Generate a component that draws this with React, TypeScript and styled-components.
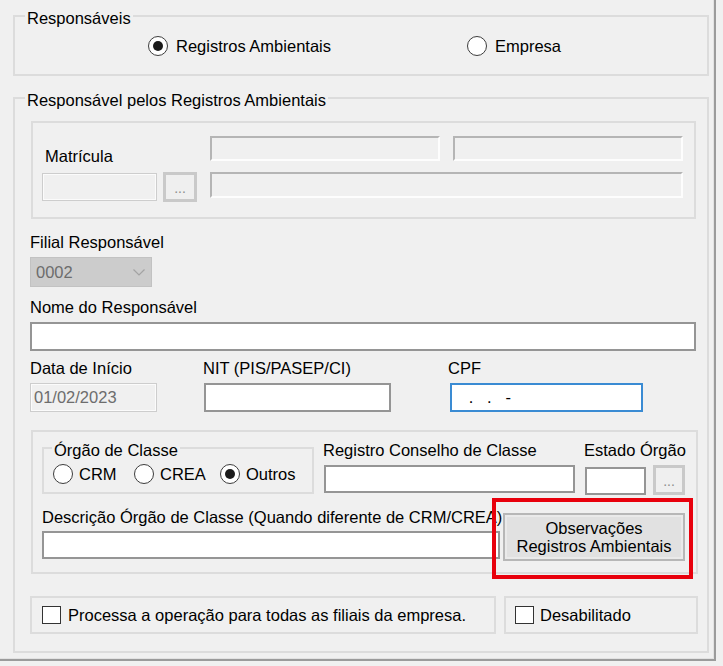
import styled, { createGlobalStyle } from 'styled-components';

const GlobalStyle = createGlobalStyle`
  html, body {
    margin: 0;
    background: #f0f0f0;
  }
  body {
    font-family: "Liberation Sans", Arial, sans-serif;
    font-size: 16.5px;
    color: #000;
  }
  * {
    box-sizing: border-box;
  }
`;

const Frame = styled.div`
  width: 716px;
  height: 661px;
  padding-top: 5px;
  border-right: 2px solid #9b9b9b;
  border-bottom: 2px solid #9b9b9b;
  box-shadow: inset -1px -1px 0 #e2e2e2;
`;

const Group = styled.fieldset<{ $m: string; $w?: number }>`
  margin: ${p => p.$m};
  padding: 0;
  min-width: 0;
  width: ${p => (p.$w ? `${p.$w}px` : 'auto')};
  border: 2px solid #dcdcdc;
`;

const Legend = styled.legend<{ $ml: number }>`
  margin-left: ${p => p.$ml}px;
  padding: 4px 2px 0;
  line-height: 18px;
  white-space: nowrap;
`;

const Body = styled.div`
  display: flex;
  flex-direction: column;
  align-items: flex-start;
  padding: 0 9px 17px 15px;
`;

const RadioRow = styled.div<{ $pad: string; $cols: string }>`
  display: grid;
  grid-template-columns: ${p => p.$cols};
  align-items: center;
  padding: ${p => p.$pad};
`;

const RadioOpt = styled.label<{ $gap: number }>`
  display: inline-flex;
  align-items: center;
  gap: ${p => p.$gap}px;
  line-height: 20px;
  white-space: nowrap;
`;

const RadioDot = styled.span<{ $on?: boolean }>`
  width: 20px;
  height: 20px;
  flex: none;
  border-radius: 50%;
  border: 1.5px solid #3d3d3d;
  background: #fff;
  display: flex;
  align-items: center;
  justify-content: center;

  &::after {
    content: '';
    width: 10px;
    height: 10px;
    border-radius: 50%;
    background: #1b1b1b;
    display: ${p => (p.$on ? 'block' : 'none')};
  }
`;

const Label = styled.div<{ $ml?: number; $mt?: number; $mb?: number }>`
  line-height: 18px;
  white-space: nowrap;
  margin: ${p => p.$mt ?? 0}px 0 ${p => p.$mb ?? 0}px ${p => p.$ml ?? 0}px;
`;

type Look = 'plain' | 'focus' | 'disabled' | 'sunken';

const borders: Record<Look, string> = {
  plain: 'border: 2px solid #959595;',
  focus: 'border: 2px solid #3a8bd3;',
  disabled: 'border: 1px solid #cdcdcd; box-shadow: inset 0 0 0 1px #fbfbfb;',
  sunken: 'border: 2px solid; border-color: #b5b5b5 #fdfdfd #fdfdfd #b5b5b5;',
};

const TextBox = styled.input<{ $w: number; $h: number; $look?: Look }>`
  width: ${p => p.$w}px;
  height: ${p => p.$h}px;
  flex: none;
  margin: 0;
  padding: 0 2px 0 3px;
  font: inherit;
  outline: none;
  color: ${p => (p.$look === 'disabled' ? '#6d6d6d' : '#000')};
  background: ${p => (p.$look === 'disabled' || p.$look === 'sunken' ? '#f0f0f0' : '#fff')};
  ${p => borders[p.$look ?? 'plain']}
`;

const DotsButton = styled.button<{ $w: number; $h: number }>`
  width: ${p => p.$w}px;
  height: ${p => p.$h}px;
  flex: none;
  margin: 0;
  padding: 0 0 4px;
  font: inherit;
  font-size: 14px;
  line-height: 1;
  color: #8d8d8d;
  background: #efefef;
  border: 3px solid #c9c9c9;
  display: flex;
  align-items: flex-end;
  justify-content: center;
`;

const Inline = styled.div<{ $gap: number; $align?: string }>`
  display: flex;
  align-items: ${p => p.$align ?? 'center'};
  gap: ${p => p.$gap}px;
`;

const MatriculaBox = styled.div`
  display: flex;
  align-self: stretch;
  height: 98px;
  margin: 12px 2px 0 1px;
  padding: 13px 0 15px 9px;
  border: 2px solid #dcdcdc;
`;

const MatriculaCol = styled.div`
  width: 155px;
  display: flex;
  flex-direction: column;
  justify-content: flex-end;
`;

const SunkenCol = styled.div`
  margin-left: 13px;
  display: flex;
  flex-direction: column;
  gap: 11px;
`;

const Combo = styled.div`
  width: 122px;
  height: 30px;
  margin-top: 6px;
  padding: 0 6px 0 5px;
  display: flex;
  align-items: center;
  justify-content: space-between;
  color: #6d6d6d;
  background: #cccccc;
  border: 1px solid #c2c2c2;
`;

const Field = styled.div<{ $ml?: number; $mt?: number; $gap?: number }>`
  display: flex;
  flex-direction: column;
  align-items: flex-start;
  gap: ${p => p.$gap ?? 6}px;
  margin-left: ${p => p.$ml ?? 0}px;
  margin-top: ${p => p.$mt ?? 0}px;
`;

const FieldRow = styled.div`
  display: flex;
  align-items: flex-start;
  margin-top: 8px;
`;

const ClassBox = styled.div`
  align-self: stretch;
  margin: 18px 0 0 1px;
  padding: 0 0 11px 9px;
  border: 2px solid #dcdcdc;
`;

const ClassRow = styled.div`
  display: flex;
  align-items: flex-start;
`;

const DescRow = styled.div`
  display: flex;
  align-items: flex-start;
  margin-top: 13px;
`;

const DescField = styled(Field)`
  width: 458px;
`;

const ObsWrap = styled.div`
  position: relative;
  margin: 5px 0 0 3px;
`;

const ObsButton = styled.button`
  display: block;
  width: 182px;
  height: 48px;
  margin: 0;
  padding: 0;
  font: inherit;
  line-height: 18px;
  color: #000;
  background: #e1e1e1;
  border: 2px solid #b7b7b7;
  box-shadow: inset 0 0 0 2px #eaeaea;
`;

const Highlight = styled.div`
  position: absolute;
  left: -11px;
  top: -15px;
  right: -8px;
  bottom: -18px;
  border: 4px solid #e8000c;
  pointer-events: none;
`;

const CheckRow = styled.div`
  align-self: stretch;
  display: flex;
  gap: 8px;
  margin-top: 22px;
`;

const CheckGroup = styled.label<{ $w?: number; $pl: number; $gap: number }>`
  height: 38px;
  flex: ${p => (p.$w ? `0 0 ${p.$w}px` : '1')};
  display: flex;
  align-items: center;
  gap: ${p => p.$gap}px;
  padding-left: ${p => p.$pl}px;
  border: 2px solid #dcdcdc;
  white-space: nowrap;
`;

const Tick = styled.span`
  width: 19px;
  height: 18px;
  flex: none;
  border: 1.5px solid #333;
  background: #fff;
`;

function Chevron() {
  return (
    <svg width="12" height="7" viewBox="0 0 12 7">
      <polyline points="0.5,0.5 6,6 11.5,0.5" fill="none" stroke="#a3a3a3" strokeWidth="1.2" />
    </svg>
  );
}

export default function App() {
  return (
    <>
      <GlobalStyle />
      <Frame>
        <Group $m="0 5px 0 13px">
          <Legend $ml={10}>Responsáveis</Legend>
          <RadioRow $pad="9px 0 18px 133px" $cols="319px auto">
            <RadioOpt $gap={8}><RadioDot $on />Registros Ambientais</RadioOpt>
            <RadioOpt $gap={8}><RadioDot />Empresa</RadioOpt>
          </RadioRow>
        </Group>

        <Group $m="11px 5px 0 13px">
          <Legend $ml={10}>Responsável pelos Registros Ambientais</Legend>
          <Body>
            <MatriculaBox>
              <MatriculaCol>
                <Label $ml={3} $mb={7}>Matrícula</Label>
                <Inline $gap={6}>
                  <TextBox $w={115} $h={28} $look="disabled" readOnly value="" />
                  <DotsButton $w={34} $h={30}>...</DotsButton>
                </Inline>
              </MatriculaCol>
              <SunkenCol>
                <Inline $gap={13}>
                  <TextBox $w={230} $h={25} $look="sunken" readOnly value="" />
                  <TextBox $w={230} $h={25} $look="sunken" readOnly value="" />
                </Inline>
                <TextBox $w={473} $h={26} $look="sunken" readOnly value="" />
              </SunkenCol>
            </MatriculaBox>

            <Label $mt={14}>Filial Responsável</Label>
            <Combo>
              <span>0002</span>
              <Chevron />
            </Combo>

            <Label $mt={11}>Nome do Responsável</Label>
            <Field $mt={6}>
              <TextBox $w={666} $h={29} readOnly value="" />
            </Field>

            <FieldRow>
              <Field>
                <Label>Data de Início</Label>
                <TextBox $w={127} $h={29} $look="disabled" readOnly value="01/02/2023" />
              </Field>
              <Field $ml={47}>
                <Label $ml={-1}>NIT (PIS/PASEP/CI)</Label>
                <TextBox $w={187} $h={29} readOnly value="" />
              </Field>
              <Field $ml={59}>
                <Label $ml={-2}>CPF</Label>
                <TextBox $w={193} $h={29} $look="focus" readOnly value="   .   .   -" />
              </Field>
            </FieldRow>

            <ClassBox>
              <ClassRow>
                <Group $m="5px 0 0 0" $w={272}>
                  <Legend $ml={8}>Órgão de Classe</Legend>
                  <RadioRow $pad="5px 0 8px 9px" $cols="81px 86px auto">
                    <RadioOpt $gap={6}><RadioDot />CRM</RadioOpt>
                    <RadioOpt $gap={6}><RadioDot />CREA</RadioOpt>
                    <RadioOpt $gap={6}><RadioDot $on />Outros</RadioOpt>
                  </RadioRow>
                </Group>
                <Field $ml={10} $mt={9}>
                  <Label $ml={-1}>Registro Conselho de Classe</Label>
                  <TextBox $w={251} $h={28} readOnly value="" />
                </Field>
                <Field $ml={10} $mt={9}>
                  <Label $ml={-1}>Estado Órgão</Label>
                  <Inline $gap={7} $align="flex-end">
                    <TextBox $w={61} $h={28} readOnly value="" />
                    <DotsButton $w={32} $h={30}>...</DotsButton>
                  </Inline>
                </Field>
              </ClassRow>
              <DescRow>
                <DescField $gap={5}>
                  <Label>Descrição Órgão de Classe (Quando diferente de CRM/CREA)</Label>
                  <TextBox $w={458} $h={28} readOnly value="" />
                </DescField>
                <ObsWrap>
                  <ObsButton>
                    Observações
                    <br />
                    Registros Ambientais
                  </ObsButton>
                  <Highlight />
                </ObsWrap>
              </DescRow>
            </ClassBox>

            <CheckRow>
              <CheckGroup $w={466} $pl={10} $gap={7}>
                <Tick />
                Processa a operação para todas as filiais da empresa.
              </CheckGroup>
              <CheckGroup $pl={9} $gap={6}>
                <Tick />
                Desabilitado
              </CheckGroup>
            </CheckRow>
          </Body>
        </Group>
      </Frame>
    </>
  );
}
